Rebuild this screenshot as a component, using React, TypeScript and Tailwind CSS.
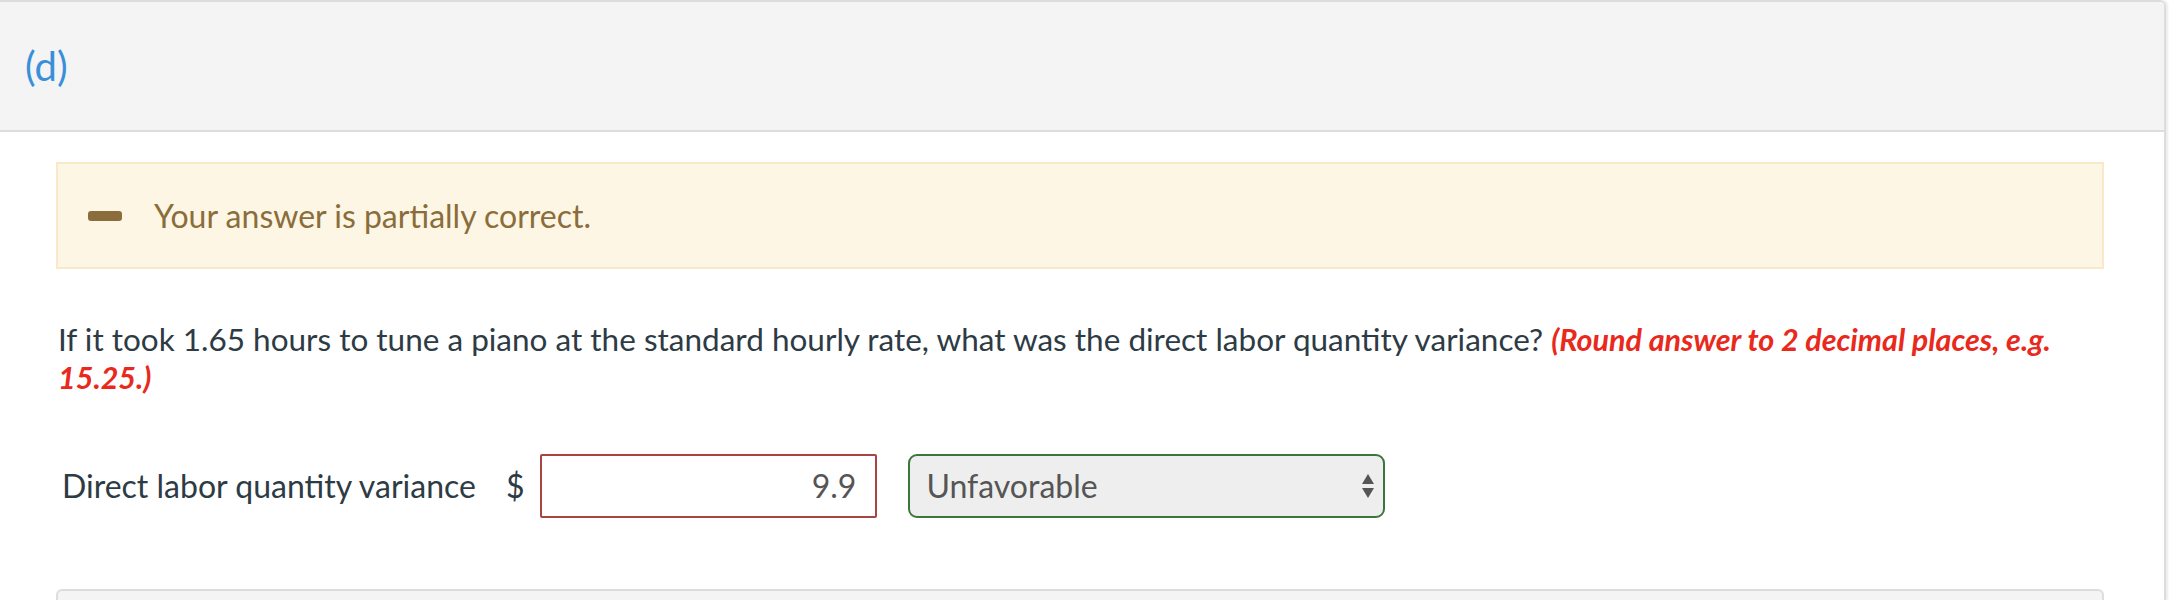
function SortArrows() {
  return (
    <svg width="14" height="26" viewBox="0 0 14 26" className="shrink-0">
      <path d="M7 1 L13 11 L1 11 Z" fill="#555555" />
      <path d="M1 15 L13 15 L7 25 Z" fill="#555555" />
    </svg>
  )
}

export default function App() {
  return (
    <div className="min-h-[600px] bg-white font-['Lato','Open_Sans',sans-serif] text-[#2d3b45]">
      <div className="mr-[3px] border-t-2 border-r-2 border-[#dddddd] rounded-tr-[6px] shadow-[2px_0_2px_rgba(0,0,0,0.08)] h-[600px] overflow-hidden">
        <div className="h-[130px] bg-[#f4f4f4] border-b-2 border-[#dddddd] flex items-center pl-[25px]">
          <span className="text-[40px] text-[#3a8fdb] leading-none">(d)</span>
        </div>

        <div className="pl-[56px] pr-[60px] pt-[30px]">
          <div className="h-[107px] border-2 border-[#f8e9c9] bg-[#fdf6e4] flex items-center pl-[30px]">
            <span className="w-[34px] h-[10px] rounded-[3px] bg-[#8a6d3b]" />
            <span className="ml-[32px] text-[32px] leading-[40px] text-[#8a6d3b]">Your answer is partially correct.</span>
          </div>

          <div className="mt-[51px] pl-[2px] text-[31.5px] leading-[38px]">
            <div>
              If it took 1.65 hours to tune a piano at the standard hourly rate, what was the direct labor quantity variance?{' '}
              <em className="font-bold text-[#e8291c] text-[30.5px]">(Round answer to 2 decimal places, e.g.</em>
            </div>
            <div>
              <em className="font-bold text-[#e8291c] text-[30.5px]">15.25.)</em>
            </div>
          </div>

          <div className="mt-[58px] flex items-center h-[64px]">
            <span className="pl-[6px] text-[32px] leading-[40px]">Direct labor quantity variance</span>
            <span className="ml-[30px] text-[32px] leading-[40px]">$</span>
            <div className="ml-[16px] w-[337px] h-[64px] border-2 border-[#a94442] rounded-[2px] flex items-center justify-end pr-[19px] text-[32px] leading-[40px] text-[#555555]">
              9.9
            </div>
            <div className="ml-[31px] w-[477px] h-[64px] border-2 border-[#3c763d] rounded-[9px] bg-[#eeeeee] flex items-center justify-between pl-[16px] pr-[8px] text-[32px] leading-[40px] text-[#555555]">
              <span>Unfavorable</span>
              <SortArrows />
            </div>
          </div>

          <div className="mt-[71px] h-[40px] border-2 border-[#dddddd] rounded-t-[6px] bg-[#f4f4f4]" />
        </div>
      </div>
    </div>
  )
}
